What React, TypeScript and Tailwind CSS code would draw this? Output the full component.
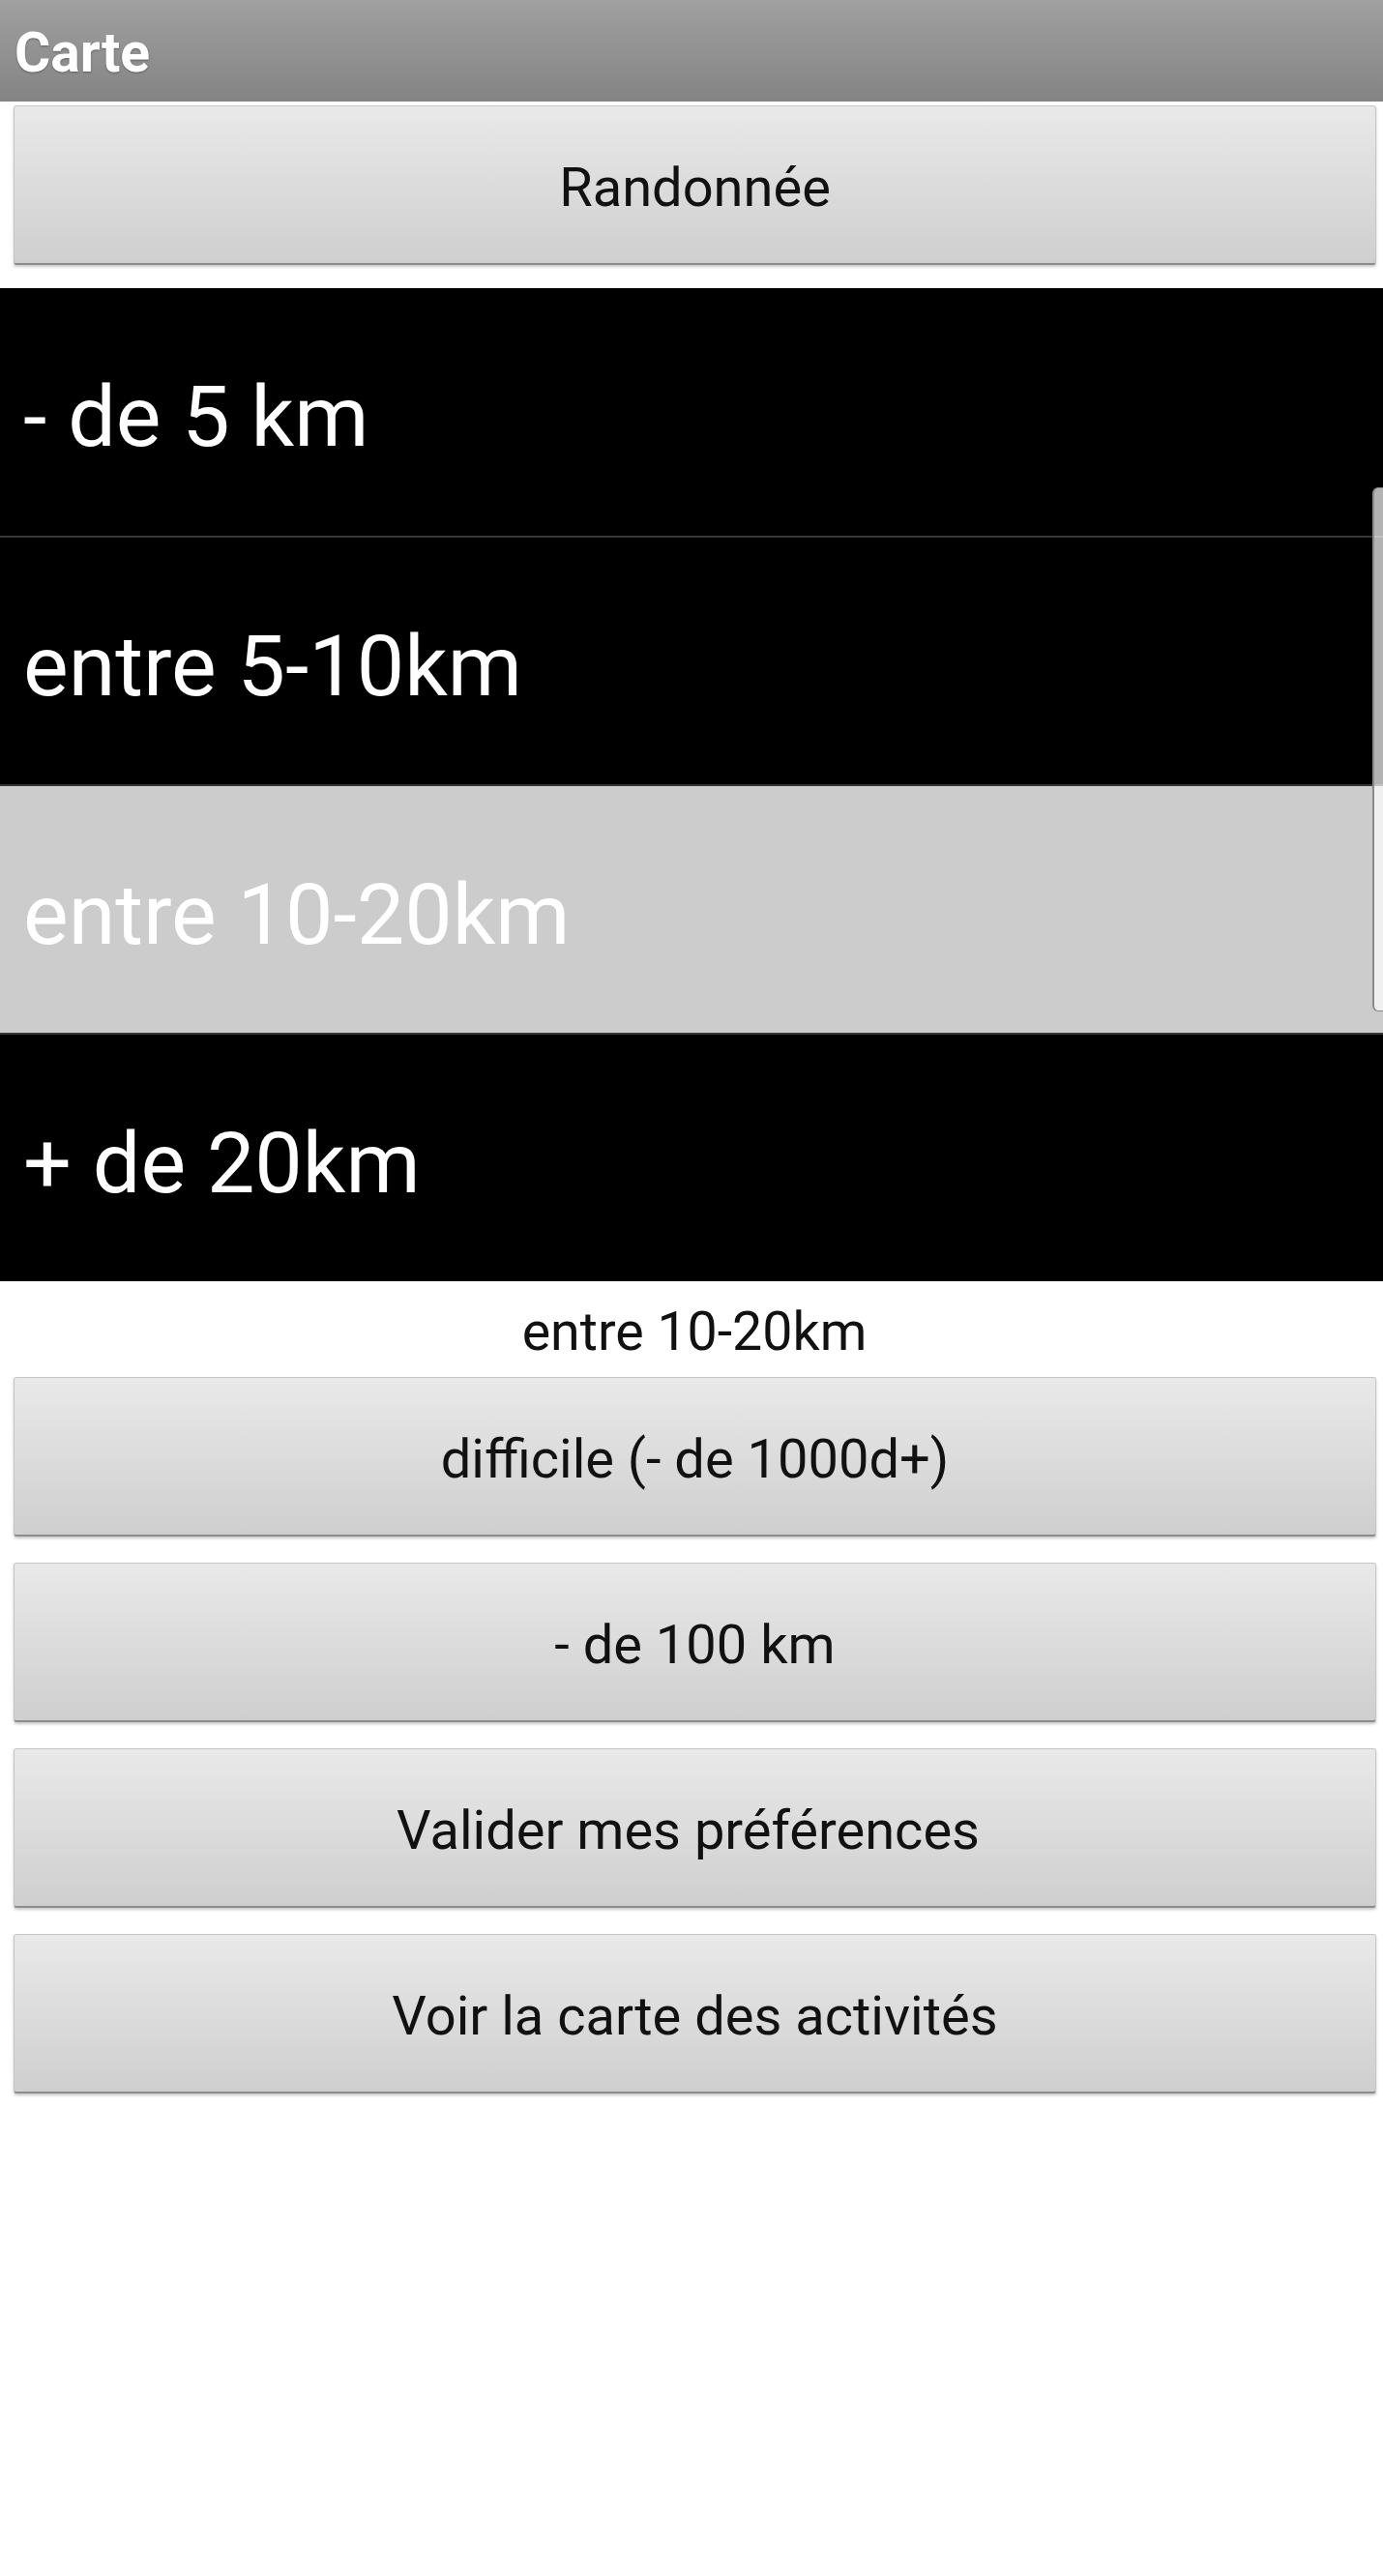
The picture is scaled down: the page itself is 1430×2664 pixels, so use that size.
import React from 'react';

const distances = [
  { label: '- de 5 km', selected: false },
  { label: 'entre 5-10km', selected: false },
  { label: 'entre 10-20km', selected: true },
  { label: '+ de 20km', selected: false },
];

// the app's label carries a trailing space, which pushes it slightly left
const actions = [
  'difficile (- de 1000d+)',
  '- de 100 km',
  'Valider mes préférences\u00a0',
  'Voir la carte des activités',
];

function LegacyButton({ children }: { children: React.ReactNode }) {
  return (
    <button className="ml-[14px] mr-[7px] h-[165px] flex items-center justify-center pt-[6px] rounded-[3px] border border-[#c6c6c6] border-b-2 border-b-[#8c8c8c] bg-linear-to-b from-[#e9e9e9] to-[#cfcfcf] shadow-[0_2px_3px_rgba(0,0,0,0.22)] text-[56px] leading-none text-[#111]">
      {children}
    </button>
  );
}

export default function App() {
  return (
    <div className="w-[1430px] min-h-[2664px] bg-white font-['Roboto',sans-serif] flex flex-col">
      {/* title bar */}
      <div className="h-[105px] px-[15px] pt-[26px] bg-linear-to-b from-[#a0a0a0] to-[#848484]">
        <h1 className="text-[57px] leading-none font-bold text-white [text-shadow:0_1px_2px_rgba(0,0,0,0.35)]">Carte</h1>
      </div>

      <div className="pt-[4px] pb-[24px] flex flex-col">
        <LegacyButton>Randonnée</LegacyButton>
      </div>

      {/* distance list */}
      <div className="relative bg-black">
        {distances.map((d, i) => (
          <div
            key={d.label}
            className={`flex items-center px-[24px] pt-[10px] text-[88px] leading-none text-white ${i === 0 ? 'h-[256px]' : 'h-[257px] border-t-2 border-[#363636]'} ${d.selected ? 'bg-[#cccccc]' : 'bg-black'}`}
          >
            {d.label}
          </div>
        ))}
        <div className="absolute right-0 top-[206px] h-[542px] w-[11px] rounded-l-[6px] bg-white/70 border-l-2 border-y border-[#8a8a8a]" />
      </div>

      <div className="pt-[25px] pb-[18px] pl-[6px] text-center text-[55.5px] leading-none text-[#111]">entre 10-20km</div>

      <div className="flex flex-col gap-[27px]">
        {actions.map(a => (
          <LegacyButton key={a}>{a}</LegacyButton>
        ))}
      </div>
    </div>
  );
}
